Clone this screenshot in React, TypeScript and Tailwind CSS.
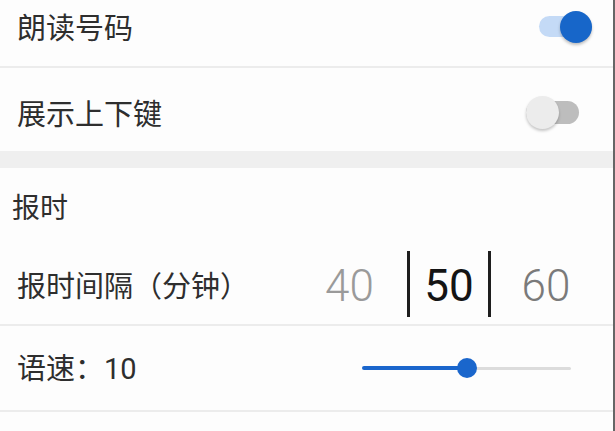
import React from "react";

const font = { fontFamily: '"Noto Sans CJK SC", "Noto Sans", sans-serif' };

function ToggleOn() {
  return (
    <div className="relative w-[53px] h-[34px] flex items-center">
      <div className="w-full h-[21px] rounded-full bg-[#c4daf6]" />
      <div className="absolute right-0 top-[1px] w-[32px] h-[32px] rounded-full bg-[#1766c9] shadow-[0_2px_3px_rgba(0,0,0,0.25)]" />
    </div>
  );
}

function ToggleOff() {
  return (
    <div className="relative w-[53px] h-[34px] flex items-center">
      <div className="w-full h-[23px] rounded-full bg-[#bdbdbd]" />
      <div className="absolute left-0 top-0 w-[33px] h-[33px] rounded-full bg-[#ececec] shadow-[0_2px_3px_rgba(0,0,0,0.22)]" />
    </div>
  );
}

export default function App() {
  return (
    <div
      className="w-[615px] h-[431px] overflow-hidden bg-[#fdfdfd] flex text-[#2e2e2e]"
      style={font}
    >
      <div className="flex-1 flex flex-col">
        {/* Row 1 */}
        <div className="h-[68px] flex items-center justify-between pl-[17px] pr-[21px] pb-[13px] border-b-2 border-[#ececec]">
          <span className="text-[29px] leading-none">朗读号码</span>
          <ToggleOn />
        </div>
        {/* Row 2 */}
        <div className="h-[83px] flex items-center justify-between pl-[17px] pr-[34px] pt-[6px]">
          <span className="text-[29px] leading-none">展示上下键</span>
          <ToggleOff />
        </div>
        {/* Gap band */}
        <div className="h-[17px] bg-[#efefef]" />
        {/* Header */}
        <div className="h-[76px] flex items-center pl-[12px] pb-[1px]">
          <span className="text-[28px] leading-none">报时</span>
        </div>
        {/* Picker row */}
        <div className="h-[82px] flex items-center justify-between pl-[17px] pr-[12px] border-b-2 border-[#ececec]">
          <span className="text-[29px] leading-none">报时间隔（分钟）</span>
          <div className="flex items-center" style={{ fontFamily: 'Roboto, "Noto Sans", sans-serif' }}>
            <div className="w-[115px] text-center text-[44px] leading-none font-light text-[#9a9a9a] pt-[3px]">40</div>
            <div className="w-[84px] h-[66px] border-x-[3px] border-[#1e1e1e] flex items-center justify-center text-[44px] leading-none text-[#141414] pt-[3px]">
              50
            </div>
            <div className="w-[110px] text-center text-[44px] leading-none font-light text-[#7a7a7a] pt-[3px]">60</div>
          </div>
        </div>
        {/* Speed row */}
        <div className="h-[86px] flex items-center justify-between pl-[17px] pr-[42px] border-b-2 border-[#ececec]">
          <span className="text-[29px] leading-none">
            语速：<span style={{ fontFamily: 'Roboto, "Noto Sans", sans-serif' }}>10</span>
          </span>
          <div className="relative w-[209px] h-[20px] flex items-center">
            <div className="w-[105px] h-[4px] bg-[#1a66cc] rounded-l-full" />
            <div className="flex-1 h-[3px] bg-[#dcdcdc] rounded-r-full" />
            <div className="absolute left-[95px] top-0 w-[20px] h-[20px] rounded-full bg-[#1a66cc]" />
          </div>
        </div>
        <div className="flex-1" />
      </div>
      <div className="w-[2px] bg-[#666666]" />
    </div>
  );
}
